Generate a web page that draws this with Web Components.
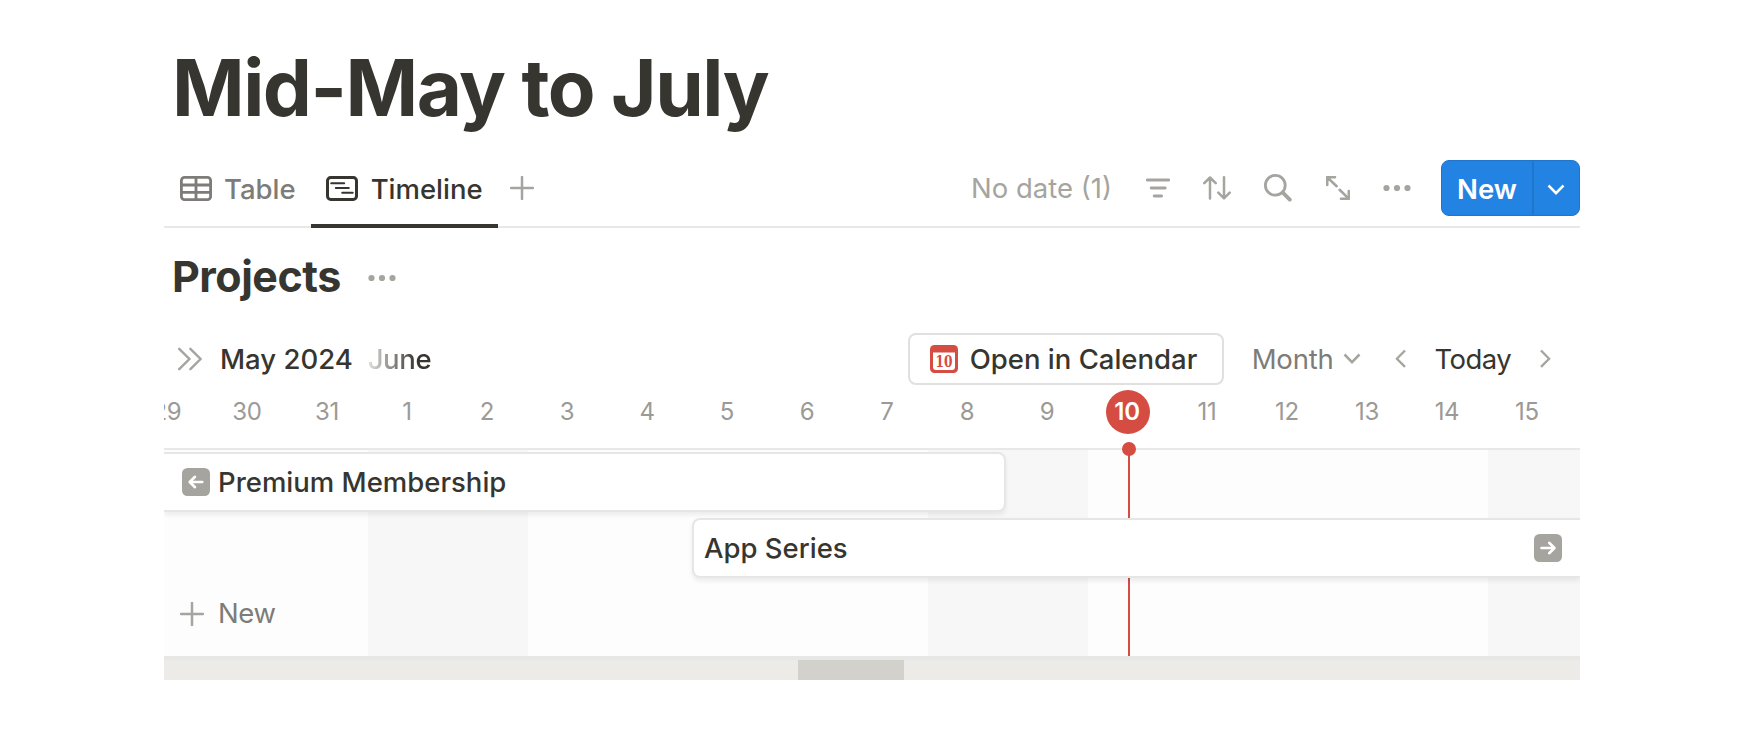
<!DOCTYPE html>
<html lang="en">
<head>
<meta charset="utf-8">
<title>Mid-May to July</title>
<style>
  body {
    margin: 0;
    background: #fff;
    --text: #37352f;
    --text-muted: #7d7c78;
    --text-light: #a5a49f;
    --line: #e8e8e7;
    --red: #d44c42;
    --blue: #2383e2;
    font-family: Inter, "Liberation Sans", sans-serif;
    font-size: 27.5px;
    color: var(--text);
  }
</style>
</head>
<body>
<project-page></project-page>

<script>
const ICONS = {
  table: [32, 26, `<g fill="none" stroke="currentColor" stroke-width="2.8"><rect x="1.4" y="1.4" width="29.2" height="22.2" rx="3.2"/><path d="M1 9h30M1 16.3h30M16 1v23"/></g>`],
  timeline: [32, 26, `<g fill="none" stroke="currentColor" stroke-linecap="round"><rect x="1.5" y="1.5" width="29" height="22" rx="3.2" stroke-width="3"/><path d="M5.2 7.2h13M9.8 12h13M16.2 16.7h10.5" stroke-width="2"/></g>`],
  plus: [24, 24, `<path d="M12 1v22M1 12h22" stroke="currentColor" stroke-width="2.5" stroke-linecap="round"/>`],
  dots: [28, 8, `<g fill="currentColor"><circle cx="3.5" cy="4" r="3.1"/><circle cx="14" cy="4" r="3.1"/><circle cx="24.5" cy="4" r="3.1"/></g>`],
  filter: [24, 20, `<path d="M1.3 2h21.4M5.2 10h14M8.2 18h7.4" stroke="currentColor" stroke-width="2.9" stroke-linecap="round"/>`],
  sort: [28, 24, `<path d="M7 22.4V2M1.3 7.2 7 1.5l5.7 5.7M21 1.2v21M15.3 16.6l5.7 5.7 5.7-5.7" fill="none" stroke="currentColor" stroke-width="2.5" stroke-linecap="round" stroke-linejoin="round"/>`],
  search: [28, 28, `<g fill="none" stroke="currentColor"><circle cx="11.3" cy="11.3" r="9.9" stroke-width="2.8"/><path d="m18.8 18.6 7 7" stroke-width="3.8" stroke-linecap="round"/></g>`],
  expand: [24, 24, `<path d="M1.2 9V1.2H9M1.6 1.6l9 8.6M22.8 15v7.8H15M22.4 22.4l-8.8-8.6" fill="none" stroke="currentColor" stroke-width="2.6" stroke-linecap="round" stroke-linejoin="round"/>`],
  down: [18, 12, `<path d="m1.5 1.5 7.5 7.6 7.5-7.6" fill="none" stroke="currentColor" stroke-width="2.5"/>`],
  left: [12, 20, `<path d="M10 1.5 1.9 9.7l8.1 8.2" fill="none" stroke="currentColor" stroke-width="2.3"/>`],
  right: [12, 20, `<path d="m2 1.5 8.1 8.2L2 17.9" fill="none" stroke="currentColor" stroke-width="2.3"/>`],
  expandTable: [24, 24, `<path d="m1.2 1.8 10.2 10.2L1.2 22.2M12.4 1.8 22.6 12 12.4 22.2" fill="none" stroke="currentColor" stroke-width="2.4" stroke-linecap="round"/>`],
  arrowLeft: [28, 28, `<rect width="28" height="28" rx="5.5" fill="currentColor"/><path d="M20.3 14H7.7M13 8.8 7.7 14l5.3 5.2" fill="none" stroke="#fff" stroke-width="2.6" stroke-linecap="round" stroke-linejoin="round"/>`],
  arrowRight: [28, 28, `<rect width="28" height="28" rx="5.5" fill="currentColor"/><path d="M7.5 14h13M15.2 8.8l5.3 5.2-5.3 5.2" fill="none" stroke="#fff" stroke-width="2.6" stroke-linecap="round" stroke-linejoin="round"/>`],
  calendar: [28, 28, `<rect width="28" height="28" rx="4.5" fill="currentColor"/><path d="M3 7.5h22V22a3 3 0 0 1-3 3H6a3 3 0 0 1-3-3z" fill="#fff"/><text x="14" y="22.4" text-anchor="middle" textLength="17" lengthAdjust="spacingAndGlyphs" font-family="DejaVu Serif, serif" font-weight="700" font-size="16.5" fill="currentColor">10</text>`]
};

class UiIcon extends HTMLElement {
  constructor() {
    super();
    this.attachShadow({ mode: "open" });
  }

  connectedCallback() {
    const [width, height, shape] = ICONS[this.getAttribute("name")];
    this.shadowRoot.innerHTML = `
      <style>
        :host { display: block; flex: none; }
        svg { display: block; }
      </style>
      <svg width="${width}" height="${height}" viewBox="0 0 ${width} ${height}">${shape}</svg>`;
  }
}
customElements.define("ui-icon", UiIcon);

class ViewTab extends HTMLElement {
  constructor() {
    super();
    this.attachShadow({ mode: "open" });
    this.shadowRoot.innerHTML = `
      <style>
        :host {
          display: flex;
          align-items: center;
          gap: 12px;
          box-sizing: border-box;
          height: 76px;
          padding: 2px 15px 4px 16px;
          font-weight: 500;
          color: var(--text-muted);
        }
        :host([active]) {
          gap: 13px;
          color: var(--text);
          border-bottom: 4px solid var(--text);
          padding: 2px 15px 0;
        }
      </style>
      <slot name="icon"></slot>
      <span><slot></slot></span>`;
  }
}
customElements.define("view-tab", ViewTab);

class NewButton extends HTMLElement {
  constructor() {
    super();
    this.attachShadow({ mode: "open" });
    this.shadowRoot.innerHTML = `
      <style>
        :host {
          display: flex;
          box-sizing: border-box;
          width: 139px;
          height: 56px;
          border: 1px solid #2076cb;
          border-radius: 8px;
          background: var(--blue);
          color: #fff;
          font-weight: 600;
        }
        .label, .more {
          display: flex;
          align-items: center;
          justify-content: center;
        }
        .label { width: 90px; padding-top: 2px; border-right: 2px solid #2076cb; }
        .more { flex: 1; padding: 4px 2px 0 0; }
      </style>
      <div class="label"><slot></slot></div>
      <div class="more"><ui-icon name="down"></ui-icon></div>`;
  }
}
customElements.define("new-button", NewButton);

class ViewToolbar extends HTMLElement {
  constructor() {
    super();
    this.attachShadow({ mode: "open" });
    this.shadowRoot.innerHTML = `
      <style>
        :host {
          display: flex;
          justify-content: space-between;
          height: 76px;
          box-shadow: inset 0 -2px var(--line);
          color: var(--text-light);
        }
        .tabs, .tools { display: flex; align-items: center; }
        .plus { margin: -4px 0 0 12px; }
        .tools { padding-bottom: 4px; }
        .tools ui-icon { margin-right: var(--gap); }
        .nodate { margin-right: 34px; }
      </style>
      <div class="tabs">
        <view-tab><ui-icon slot="icon" name="table"></ui-icon>Table</view-tab>
        <view-tab active><ui-icon slot="icon" name="timeline"></ui-icon>Timeline</view-tab>
        <ui-icon class="plus" name="plus"></ui-icon>
      </div>
      <div class="tools">
        <span class="nodate">No date (1)</span>
        <ui-icon name="filter" style="--gap:33px"></ui-icon>
        <ui-icon name="sort" style="--gap:33px"></ui-icon>
        <ui-icon name="search" style="--gap:34px"></ui-icon>
        <ui-icon name="expand" style="--gap:33px"></ui-icon>
        <ui-icon name="dots" style="--gap:30px"></ui-icon>
        <new-button>New</new-button>
      </div>`;
  }
}
customElements.define("view-toolbar", ViewToolbar);

class TimelineControls extends HTMLElement {
  constructor() {
    super();
    this.attachShadow({ mode: "open" });
    this.shadowRoot.innerHTML = `
      <style>
        :host {
          display: flex;
          align-items: center;
          height: 52px;
          padding: 0 29px 0 14px;
          color: var(--text-light);
        }
        .month, .next { font-weight: 500; color: var(--text); }
        .month { margin-left: 18px; }
        .next {
          margin: 0 auto 0 15px;
          letter-spacing: -.4px;
          -webkit-mask-image: linear-gradient(to right, rgba(0, 0, 0, .15), #000 48px);
          mask-image: linear-gradient(to right, rgba(0, 0, 0, .15), #000 48px);
        }
        .open {
          display: flex;
          align-items: center;
          gap: 12px;
          box-sizing: border-box;
          width: 316px;
          height: 52px;
          padding-left: 20px;
          border: 2px solid #e0e0df;
          border-radius: 8px;
          font-weight: 500;
          color: var(--text);
        }
        .open ui-icon { color: var(--red); }
        .scale { margin: 0 9px 0 28px; letter-spacing: -.2px; color: var(--text-muted); }
        .today { margin: 0 28px; letter-spacing: -.6px; color: var(--text); }
        .prev { margin-left: 34px; }
      </style>
      <ui-icon name="expandTable"></ui-icon>
      <span class="month">May 2024</span>
      <span class="next">June</span>
      <div class="open"><ui-icon name="calendar"></ui-icon><span>Open in Calendar</span></div>
      <span class="scale">Month</span>
      <ui-icon name="down"></ui-icon>
      <ui-icon class="prev" name="left"></ui-icon>
      <span class="today">Today</span>
      <ui-icon name="right"></ui-icon>`;
  }
}
customElements.define("timeline-controls", TimelineControls);

class TimelineDays extends HTMLElement {
  constructor() {
    super();
    this.attachShadow({ mode: "open" });
  }

  connectedCallback() {
    const today = this.getAttribute("today");
    const days = this.getAttribute("days").split(" ");
    this.shadowRoot.innerHTML = `
      <style>
        :host {
          display: block;
          overflow: hidden;
          height: 63px;
          border-bottom: 2px solid var(--line);
          font-size: 24px;
          color: #9b9a96;
        }
        .days {
          display: grid;
          grid-auto-flow: column;
          grid-auto-columns: 80px;
          margin-left: -36px;
          padding-top: 5px;
        }
        .day {
          display: flex;
          align-items: center;
          justify-content: center;
          box-sizing: border-box;
          width: 44px;
          height: 44px;
          margin: 0 auto;
          padding: 0 2px 2px 0;
          border-radius: 50%;
          letter-spacing: -.3px;
        }
        .today { background: var(--red); color: #fff; font-weight: 600; }
      </style>
      <div class="days">
        ${days.map(d => `<div class="day${d === today ? " today" : ""}">${d}</div>`).join("")}
      </div>`;
  }
}
customElements.define("timeline-days", TimelineDays);

class TimelineBar extends HTMLElement {
  constructor() {
    super();
    this.attachShadow({ mode: "open" });
    this.shadowRoot.innerHTML = `
      <style>
        :host {
          display: flex;
          align-items: center;
          gap: 8px;
          box-sizing: border-box;
          height: 60px;
          background: #fff;
          border: 2px solid #e6e6e5;
          box-shadow: 0 3px 5px rgba(15, 15, 15, .07);
          font-weight: 500;
        }
        :host([from-before]) {
          border-left: 0;
          border-radius: 0 8px 8px 0;
          padding-left: 18px;
        }
        :host([to-after]) {
          border-right: 0;
          border-radius: 8px 0 0 8px;
          justify-content: space-between;
          padding: 0 18px 0 10px;
        }
        ::slotted(ui-icon) { color: var(--text-light); }
      </style>
      <slot></slot>`;
  }
}
customElements.define("timeline-bar", TimelineBar);

class TimelineGrid extends HTMLElement {
  constructor() {
    super();
    this.attachShadow({ mode: "open" });
    this.shadowRoot.innerHTML = `
      <style>
        :host {
          display: block;
          position: relative;
          height: 206px;
          /* weekend columns */
          background:
            linear-gradient(#f7f7f7, #f7f7f7) 204px 0 / 160px 100% no-repeat,
            linear-gradient(#f7f7f7, #f7f7f7) 764px 0 / 160px 100% no-repeat,
            linear-gradient(#f7f7f7, #f7f7f7) 1324px 0 / 92px 100% no-repeat,
            #fdfdfd;
        }
        .now {
          position: absolute;
          left: 964px;
          top: 0;
          width: 2px;
          height: 100%;
          background: var(--red);
        }
        .now::before {
          content: "";
          position: absolute;
          left: -6px;
          top: -8px;
          width: 14px;
          height: 14px;
          border-radius: 50%;
          background: var(--red);
        }
        .rows {
          position: relative;
          display: grid;
          gap: 6px;
          height: 100%;
          padding-top: 2px;
          box-sizing: border-box;
          align-content: start;
          overflow: hidden;
        }
        .first { margin-right: 574px; }
        .second { margin-left: 528px; }
        .new {
          display: flex;
          align-items: center;
          gap: 14px;
          height: 60px;
          padding-left: 16px;
          color: var(--text-muted);
        }
        .new span { padding-bottom: 2px; letter-spacing: -.4px; }
        .new ui-icon { color: var(--text-light); }
      </style>
      <div class="now"></div>
      <div class="rows">
        <timeline-bar class="first" from-before><ui-icon name="arrowLeft"></ui-icon><span>Premium Membership</span></timeline-bar>
        <timeline-bar class="second" to-after><span>App Series</span><ui-icon name="arrowRight"></ui-icon></timeline-bar>
        <div class="new"><ui-icon name="plus"></ui-icon><span>New</span></div>
      </div>`;
  }
}
customElements.define("timeline-grid", TimelineGrid);

class ProjectPage extends HTMLElement {
  constructor() {
    super();
    this.attachShadow({ mode: "open" });
    this.shadowRoot.innerHTML = `
      <style>
        :host {
          display: block;
          width: 1416px;
          margin-left: 164px;
        }
        h1, h2 { margin: 0; font-weight: 700; }
        h1 {
          height: 152px;
          padding-left: 8px;
          box-sizing: border-box;
          font-size: 78px;
          line-height: 176px;
          letter-spacing: -1.5px;
        }
        .heading {
          display: flex;
          align-items: center;
          gap: 27px;
          height: 105px;
          padding-left: 8px;
        }
        h2 {
          margin-top: -10px;
          font-size: 43px;
          line-height: 60px;
          letter-spacing: -.5px;
        }
        .heading ui-icon { margin-top: -6px; color: var(--text-light); }
        .scroll {
          box-sizing: border-box;
          height: 24px;
          border-top: 4px solid #e7e7e5;
          padding-left: 634px;
          background: #ecebe7;
        }
        .thumb { width: 106px; height: 20px; background: #d2d1cb; }
      </style>
      <h1>Mid-May to July</h1>
      <view-toolbar></view-toolbar>
      <div class="heading"><h2>Projects</h2><ui-icon name="dots"></ui-icon></div>
      <timeline-controls></timeline-controls>
      <timeline-days today="10" days="29 30 31 1 2 3 4 5 6 7 8 9 10 11 12 13 14 15"></timeline-days>
      <timeline-grid></timeline-grid>
      <div class="scroll"><div class="thumb"></div></div>`;
  }
}
customElements.define("project-page", ProjectPage);
</script>
</body>
</html>
